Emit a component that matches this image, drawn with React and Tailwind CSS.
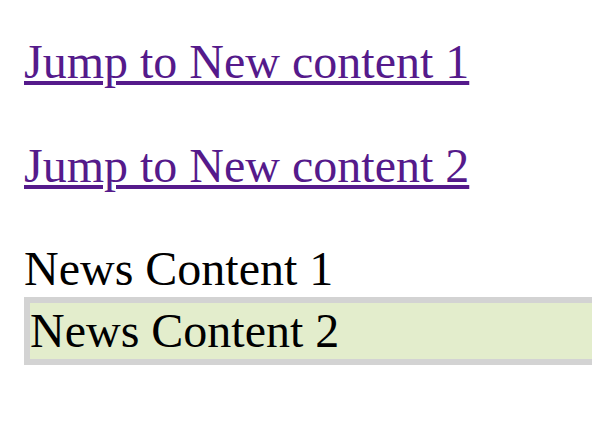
export default function App() {
  return (
    <div className="min-h-[439px] w-full overflow-hidden bg-white pl-[24px] pt-[35px] font-['Liberation_Serif',_'Times_New_Roman',_serif] text-[48px] leading-[53px] text-black">
      <p>
        <a href="#news1" className="text-[#551a8b] underline">
          Jump to New content 1
        </a>
      </p>
      <p className="mt-[51px]">
        <a href="#news2" className="text-[#551a8b] underline">
          Jump to New content 2
        </a>
      </p>
      <div id="news1" className="mt-[50px]">
        News Content 1
      </div>
      <div
        id="news2"
        className="mt-[2px] w-[620px] border-[6px] border-[#d3d3d3] bg-[#e3edcc] leading-[56px]"
      >
        News Content 2
      </div>
    </div>
  );
}
